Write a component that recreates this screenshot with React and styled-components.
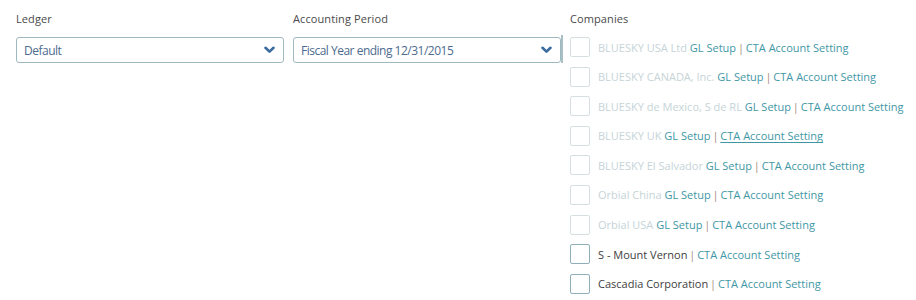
import React from "react";
import styled, { createGlobalStyle } from "styled-components";

const Global = createGlobalStyle`
  html, body { margin: 0; padding: 0; background: #fff; }
  body { font-family: "Open Sans", "Liberation Sans", sans-serif; }
`;

const Page = styled.div`
  display: grid;
  grid-template-columns: 268px 268px 1fr;
  column-gap: 9px;
  padding: 12px 0 0 16px;
  width: 916px;
  height: 300px;
  box-sizing: border-box;
`;

const Field = styled.div`
  display: flex;
  flex-direction: column;
  position: relative;
`;

const Label = styled.div`
  font-size: 11px;
  line-height: 14px;
  color: #4a4a4a;
  height: 14px;
  margin-bottom: 11px;
  letter-spacing: 0.1px;
`;

const Select = styled.div`
  display: flex;
  align-items: center;
  justify-content: space-between;
  height: 26px;
  box-sizing: border-box;
  border: 1px solid #9fb9c1;
  border-radius: 3px;
  padding: 0 8px 0 7px;
  font-size: 12px;
  letter-spacing: -0.5px;
  color: #4d6b8f;
`;

const Chevron = () => (
  <svg width="11" height="8" viewBox="0 0 11 8">
    <path d="M1.5 1.8 L5.5 5.6 L9.5 1.8" fill="none" stroke="#3a6aa0" strokeWidth="2.6" strokeLinecap="round" strokeLinejoin="round" />
  </svg>
);

const List = styled.div`
  display: flex;
  flex-direction: column;
  gap: 9.6px;
`;

const Row = styled.div`
  display: flex;
  align-items: center;
  height: 20px;
  font-size: 11px;
  white-space: pre;
`;

const Box = styled.span`
  width: 20px;
  height: 20px;
  box-sizing: border-box;
  border: 1px solid ${(p) => (p.$enabled ? "#8fb0b8" : "#d6e0e3")};
  border-radius: 2px;
  margin-right: 8px;
  flex: none;
`;

const Name = styled.span`
  color: ${(p) => (p.$enabled ? "#3e3e3e" : "#c6d4d8")};
`;

const Link = styled.span`
  color: #3f97a6;
  text-decoration: ${(p) => (p.$underline ? "underline" : "none")};
  text-underline-offset: 2px;
`;

const Sep = styled.span`
  color: #a88c7c;
  word-spacing: -1px;
`;

const EdgeMark = styled.span`
  position: absolute;
  left: -9px;
  top: 23px;
  width: 2px;
  height: 28px;
  background: #a8bfc5;
`;

const companies = [
  { name: "BLUESKY USA Ltd", gl: true },
  { name: "BLUESKY CANADA, Inc.", gl: true },
  { name: "BLUESKY de Mexico, S de RL", gl: true },
  { name: "BLUESKY UK", gl: true, underline: true },
  { name: "BLUESKY El Salvador", gl: true },
  { name: "Orbial China", gl: true },
  { name: "Orbial USA", gl: true },
  { name: "S - Mount Vernon", enabled: true },
  { name: "Cascadia Corporation", enabled: true },
];

export default function App() {
  return (
    <>
      <Global />
      <Page>
        <Field>
          <Label>Ledger</Label>
          <Select>
            <span>Default</span>
            <Chevron />
          </Select>
        </Field>
        <Field>
          <Label>Accounting Period</Label>
          <Select>
            <span>Fiscal Year ending 12/31/2015</span>
            <Chevron />
          </Select>
        </Field>
        <Field>
          <EdgeMark />
          <Label>Companies</Label>
          <List>
            {companies.map((c) => (
              <Row key={c.name}>
                <Box $enabled={c.enabled} />
                <Name $enabled={c.enabled}>{c.name}</Name>
                {c.gl && <Link>{" GL Setup"}</Link>}
                <Sep>{" | "}</Sep>
                <Link $underline={c.underline}>CTA Account Setting</Link>
              </Row>
            ))}
          </List>
        </Field>
      </Page>
    </>
  );
}
